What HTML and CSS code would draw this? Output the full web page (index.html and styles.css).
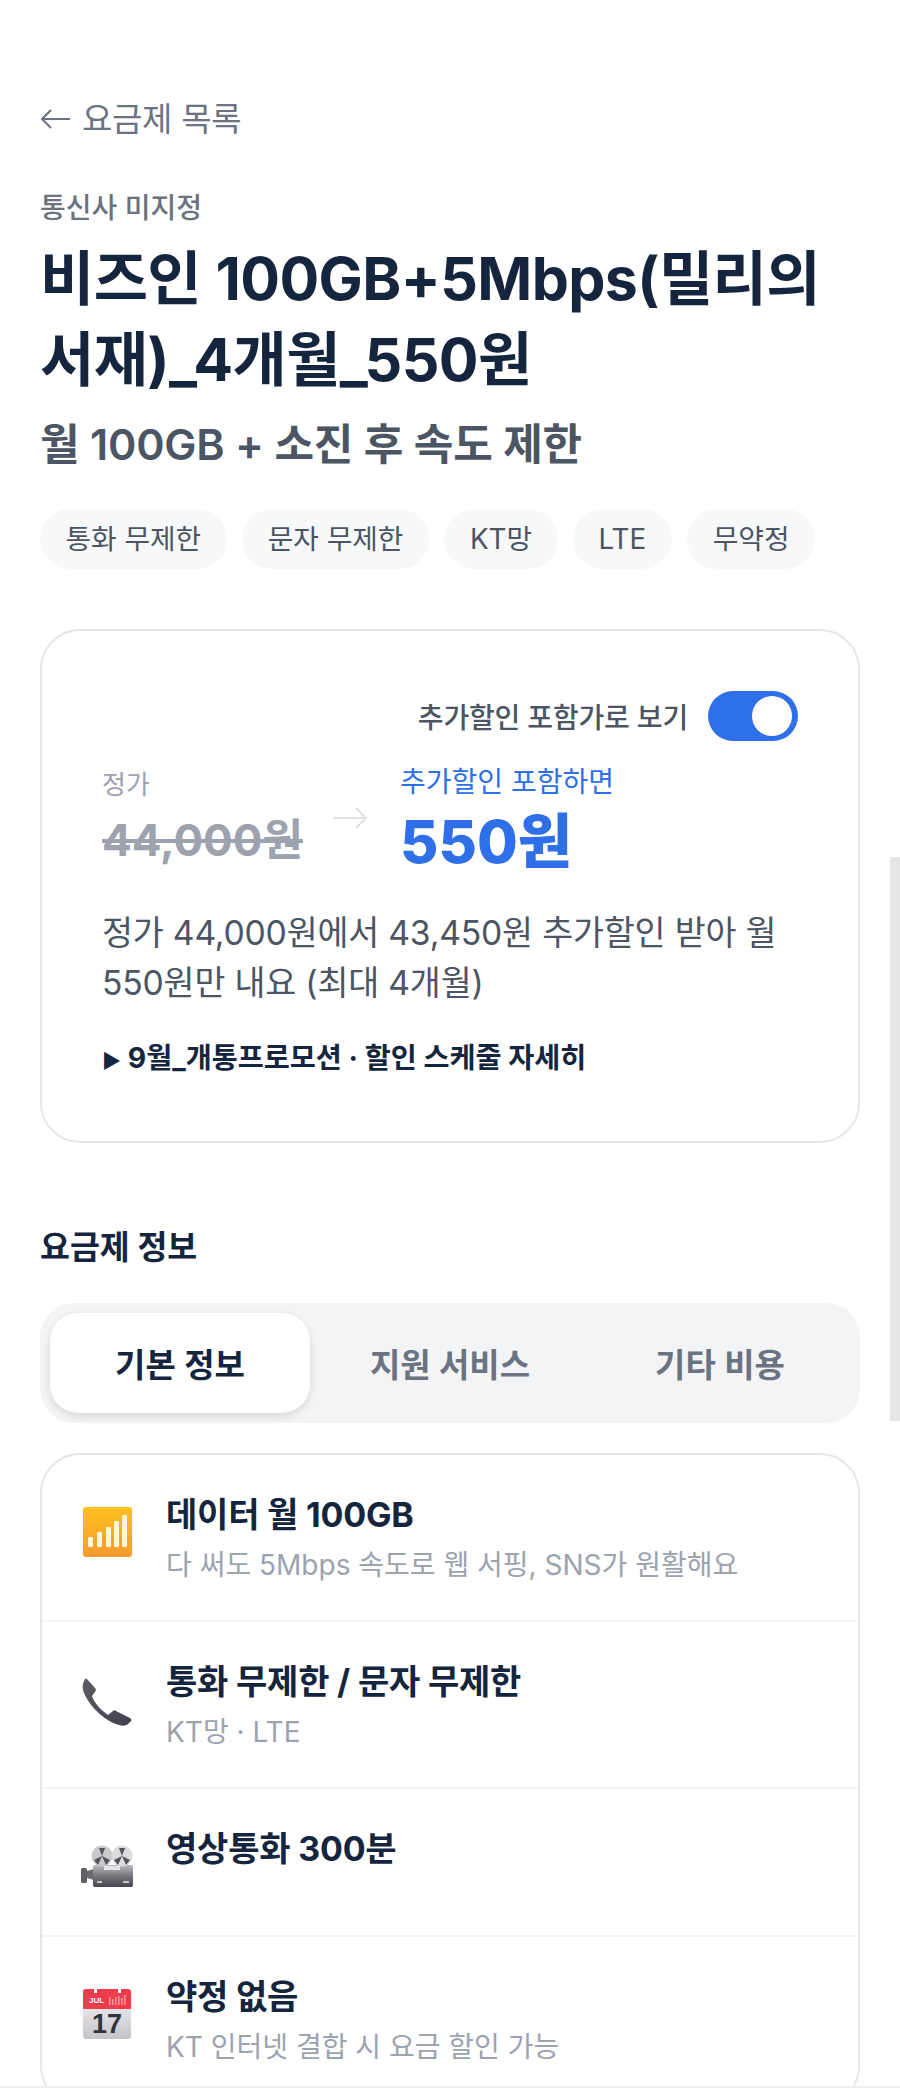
FILE: index.html
```html
<!DOCTYPE html>
<html lang="ko">
<head>
<meta charset="utf-8">
<title>비즈인 100GB+5Mbps</title>
<link rel="stylesheet" href="styles.css">
</head>
<body>
<main class="page">
  <a class="back"><svg class="back-arrow" viewBox="0 0 30 20" width="30" height="20"><path d="M30 10H2M11 1 2 10l9 9" fill="none" stroke="#6b7280" stroke-width="2"/></svg>요금제 목록</a>
  <p class="carrier">통신사 미지정</p>
  <h1 class="title">비즈인 100GB+5Mbps(밀리의 서재)_4개월_550원</h1>
  <p class="subtitle">월 100GB + 소진 후 속도 제한</p>
  <ul class="chips">
    <li class="chip">통화 무제한</li>
    <li class="chip">문자 무제한</li>
    <li class="chip">KT망</li>
    <li class="chip">LTE</li>
    <li class="chip">무약정</li>
  </ul>

  <section class="price-card">
    <div class="toggle-row">
      <span class="toggle-label">추가할인 포함가로 보기</span>
      <span class="toggle"><span class="toggle-knob"></span></span>
    </div>
    <div class="price-row">
      <div class="price-old">
        <span class="price-old-label">정가</span>
        <s class="price-old-value">44,000원</s>
      </div>
      <svg class="price-arrow" viewBox="0 0 36 24" width="36" height="24"><path d="M1 12H34M24 2l10 10-10 10" fill="none" stroke="#dfe2e6" stroke-width="2"/></svg>
      <div class="price-new">
        <span class="price-new-label">추가할인 포함하면</span>
        <strong class="price-new-value">550원</strong>
      </div>
    </div>
    <p class="price-desc">정가 44,000원에서 43,450원 추가할인 받아 월 550원만 내요 (최대 4개월)</p>
    <p class="promo"><span class="promo-mark">▶</span> 9월_개통프로모션 · 할인 스케줄 자세히</p>
  </section>

  <h2 class="section-title">요금제 정보</h2>
  <div class="tabs">
    <div class="tab tab-active">기본 정보</div>
    <div class="tab">지원 서비스</div>
    <div class="tab">기타 비용</div>
  </div>

  <section class="info-card">
    <div class="info-row">
      <svg class="info-icon" viewBox="0 0 50 50" width="50" height="50">
        <defs><linearGradient id="sig" x1="0" y1="0" x2="0" y2="1"><stop offset="0" stop-color="#fdc11c"/><stop offset="1" stop-color="#f59a30"/></linearGradient></defs>
        <rect x="1" y="0" width="49" height="50" rx="3" fill="url(#sig)"/>
        <g fill="#fff6dc"><rect x="6" y="30" width="5" height="10" rx="1"/><rect x="15" y="25" width="5" height="15" rx="1"/><rect x="24" y="20" width="5" height="20" rx="1"/><rect x="32" y="14" width="5" height="26" rx="1"/><rect x="40" y="8" width="5" height="32" rx="1"/></g>
      </svg>
      <div class="info-text"><div class="info-title">데이터 월 100GB</div><div class="info-sub">다 써도 5Mbps 속도로 웹 서핑, SNS가 원활해요</div></div>
    </div>
    <div class="info-row">
      <svg class="info-icon info-icon-phone" viewBox="0 0 50 48" width="50" height="48">
        <defs><linearGradient id="ph" x1="0" y1="0" x2="1" y2="1"><stop offset="0" stop-color="#5d5d62"/><stop offset="1" stop-color="#42404e"/></linearGradient></defs>
        <path d="M5 1l8 9c1 1 1 2 .5 3L10 18c3 8 9 14 16 19l5-4c1-1 2-1 3 0l14 7c1 1 2 2 1 3l-3 3c-2 2-6 2-9 1C22 43 5 26 1 12 0 9 1 5 2 3l1-2c.5-.5 1.500-.5 2 0z" fill="url(#ph)"/>
      </svg>
      <div class="info-text"><div class="info-title">통화 무제한 / 문자 무제한</div><div class="info-sub">KT망 · LTE</div></div>
    </div>
    <div class="info-row info-row-single">
      <svg class="info-icon info-icon-cam" viewBox="0 0 52 42" width="52" height="42">
        <defs><linearGradient id="cam" x1="0" y1="0" x2="0" y2="1"><stop offset="0" stop-color="#b9b9bd"/><stop offset=".5" stop-color="#76757c"/><stop offset="1" stop-color="#48464f"/></linearGradient></defs>
        <rect x="0" y="23" width="6" height="15" rx="1.500" fill="#5f5e64"/>
        <path d="M6 26l7-2v11l-7-2z" fill="#6a6970"/>
        <rect x="12" y="20" width="40" height="22" rx="2" fill="url(#cam)"/>
        <circle cx="21" cy="11" r="10.500" fill="#c9c9cc"/><circle cx="41" cy="11" r="10.500" fill="#dcdcde"/>
        <g fill="#55545a"><path d="M21 11l-3-8h6zM21 11l8 4-4 5zM21 11l-8 4 4 5zM41 11l-3-8h6zM41 11l8 4-4 5zM41 11l-8 4 4 5z"/></g>
        <rect x="23" y="21" width="16" height="4" fill="#e4e4e6"/>
        <rect x="16" y="36" width="5" height="2" fill="#c9c9cc"/><rect x="42" y="36" width="6" height="2" fill="#c9c9cc"/>
      </svg>
      <div class="info-text"><div class="info-title">영상통화 300분</div></div>
    </div>
    <div class="info-row">
      <svg class="info-icon" viewBox="0 0 50 50" width="50" height="50">
        <defs><linearGradient id="calb" x1="0" y1="0" x2="0" y2="1"><stop offset="0" stop-color="#fafafb"/><stop offset="1" stop-color="#c3c3ca"/></linearGradient></defs>
        <rect x="1" y="0" width="48" height="50" rx="3" fill="url(#calb)"/>
        <path d="M1 20V3a3 3 0 0 1 3-3h42a3 3 0 0 1 3 3v17z" fill="#ee3c4c"/>
        <rect x="12" y="0" width="3" height="4" fill="#fff"/><rect x="36" y="0" width="3" height="4" fill="#fff"/>
        <text x="7" y="14" class="cal-month">JUL</text>
        <g fill="#f59aa2"><rect x="27" y="8" width="1.500" height="8"/><rect x="30" y="10" width="1.500" height="6"/><rect x="33" y="8" width="1.500" height="8"/><rect x="36" y="7" width="1.500" height="9"/><rect x="39" y="9" width="1.500" height="7"/><rect x="42" y="6" width="1.500" height="10"/></g>
        <text x="25" y="44" class="cal-day">17</text>
      </svg>
      <div class="info-text"><div class="info-title">약정 없음</div><div class="info-sub">KT 인터넷 결합 시 요금 할인 가능</div></div>
    </div>
  </section>
</main>
<div class="scrollbar"></div>
<div class="bottom-edge"></div>
</body>
</html>
```

FILE: styles.css
```css
* { box-sizing: border-box; }
html, body { margin: 0; height: 2092px; overflow: hidden; background: #fff; }
body { font-family: "Inter", "Noto Sans CJK KR", sans-serif; color: #14253d; position: relative; }
p, h1, h2, ul { margin: 0; padding: 0; }
ul { list-style: none; }

.page { padding: 97px 40px 0; }
.back { display: flex; align-items: center; gap: 12px; font-size: 33px; line-height: 44px; color: #6b7280; letter-spacing: -0.3px; }
.back-arrow { flex: none; }
.carrier { margin-top: 49px; font-size: 28px; line-height: 36px; font-weight: 500; color: #6b7280; }
.title { margin-top: 12px; font-size: 59px; line-height: 81px; font-weight: 700; color: #14253d; letter-spacing: -0.6px; word-spacing: 1px; }
.subtitle { margin-top: 16px; font-size: 43px; line-height: 56px; font-weight: 600; color: #4b5563; letter-spacing: -0.2px; }

.chips { display: flex; gap: 15.500px; margin-top: 37px; }
.chip { height: 60px; padding: 0 25.500px; border-radius: 30px; background: #f7f8fa; font-size: 27.800px; line-height: 60px; color: #4b5563; }

.price-card { margin-top: 60px; height: 514px; padding: 60px 60px 0; border: 2px solid #e5e7eb; border-radius: 40px; }
.toggle-row { display: flex; justify-content: flex-end; align-items: center; gap: 20px; height: 50px; }
.toggle-label { font-size: 28px; font-weight: 500; color: #4b5563; letter-spacing: -0.2px; }
.toggle { width: 90px; height: 50px; border-radius: 25px; background: #2f6fe8; display: flex; align-items: center; justify-content: flex-end; padding-right: 6px; }
.toggle-knob { width: 40px; height: 40px; border-radius: 50%; background: #fff; }

.price-row { display: flex; margin-top: 22px; align-items: flex-start; }
.price-old { display: flex; flex-direction: column; width: 230px; padding-top: 3px; }
.price-old-label { font-size: 26px; line-height: 38px; color: #9ca3af; }
.price-old-value { margin-top: 6px; font-size: 44px; line-height: 60px; font-weight: 700; color: #9ca3af; }
.price-arrow { margin-top: 43px; }
.price-new { display: flex; flex-direction: column; margin-left: 32px; }
.price-new-label { font-size: 28px; line-height: 38px; color: #2f6fe8; }
.price-new-value { margin-top: 3px; font-size: 59px; line-height: 76px; font-weight: 800; color: #2f6fe8; }

.price-desc { margin-top: 28px; font-size: 33.700px; line-height: 50px; color: #4b5563; letter-spacing: -0.2px; }
.promo { margin-top: 31px; font-size: 28.300px; line-height: 38px; font-weight: 700; color: #14253d; }
.promo-mark { font-size: 20px; }

.section-title { margin-top: 83px; font-size: 32.500px; line-height: 44px; font-weight: 700; color: #14253d; }
.tabs { display: flex; gap: 10px; margin-top: 33px; height: 120px; padding: 10px; border-radius: 34px; background: #f3f4f6; }
.tab { flex: 1; display: flex; align-items: center; justify-content: center; font-size: 33px; font-weight: 600; color: #6b7280; border-radius: 28px; }
.tab-active { background: #fff; color: #14253d; box-shadow: 0 3px 8px rgba(0, 0, 0, 0.12); }

.info-card { margin-top: 30px; border: 2px solid #e5e7eb; border-radius: 40px; }
.info-row { display: flex; gap: 34px; height: 167px; padding: 37px 40px 0; border-bottom: 2px solid #f3f4f6; }
.info-row-single { height: 148px; }
.info-icon { flex: none; margin-top: 15px; }
.info-icon-phone { margin-top: 19px; }
.info-icon-cam { margin-top: 19px; margin-left: -1px; margin-right: -1px; }
.info-title { font-size: 34px; line-height: 46px; font-weight: 700; color: #14253d; letter-spacing: -0.2px; }
.info-sub { margin-top: 4px; font-size: 28px; line-height: 46px; color: #9ca3af; }
.cal-month { font-family: "Liberation Sans", sans-serif; font-size: 8px; font-weight: 700; fill: #fff; }
.cal-day { font-family: "Liberation Sans", sans-serif; font-size: 27px; font-weight: 700; fill: #33333a; text-anchor: middle; }

.scrollbar { position: absolute; right: 0; top: 857px; width: 10px; height: 564px; background: #e6e6e6; }
.bottom-edge { position: absolute; left: 0; right: 0; top: 2086px; bottom: 0; background: #fff; border-top: 2px solid #eeeff1; }
```
